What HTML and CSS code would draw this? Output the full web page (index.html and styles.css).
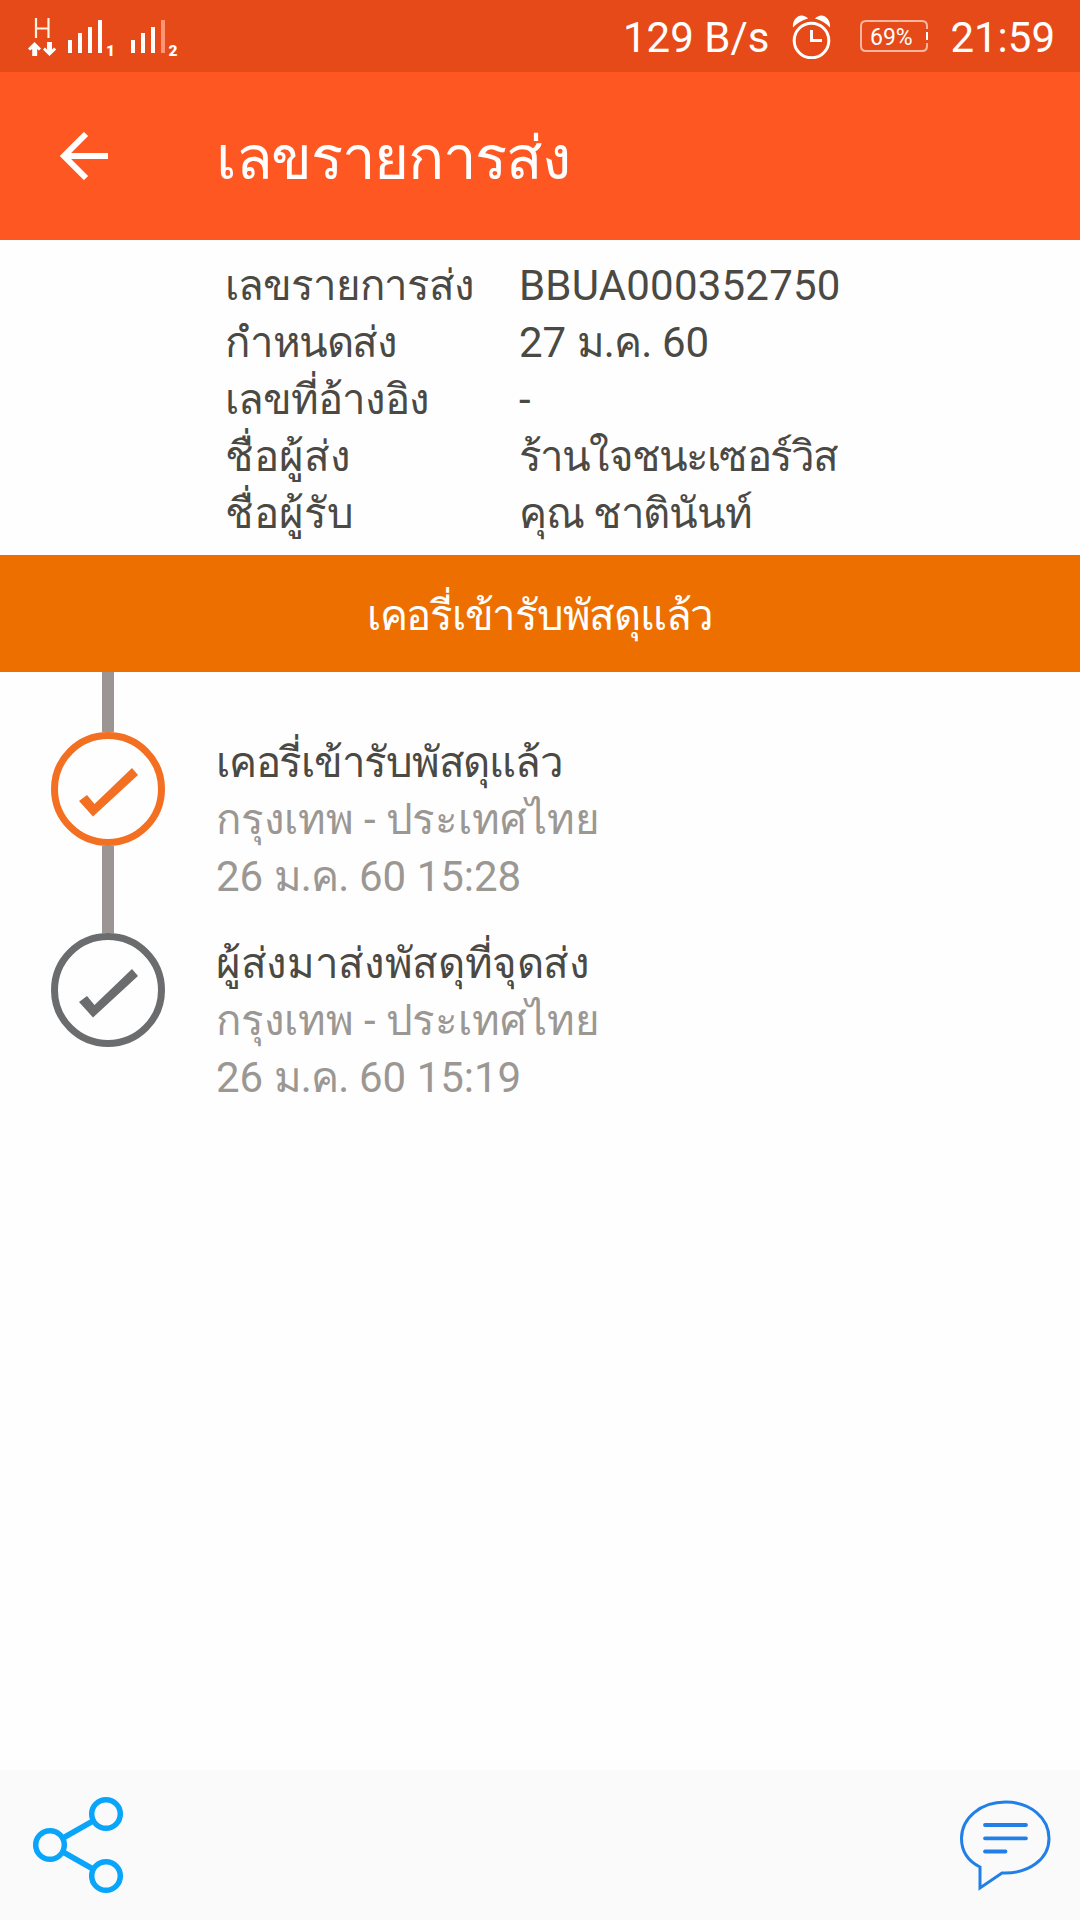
FILE: index.html
```
<!DOCTYPE html>
<html lang="th">
<head>
<meta charset="utf-8">
<title>เลขรายการส่ง</title>
<link rel="stylesheet" href="styles.css">
</head>
<body>
<div class="screen">
  <div class="status-bar">
    <svg class="network" width="152" height="44" viewBox="0 0 152 44" fill="none">
      <path d="M8 3V23M20.500 3V23M8 13.500H20.500" stroke="#fff3df" stroke-width="2.200"/>
      <path d="M6.500 27L13 33.500L11 35.500L9.200 34V41H4.200V34L2 35.500L0 33.500ZM19 27H24V34.500L26 32.500L28.200 34.500L21.500 41L15 34.500L17 32.500L19 34.500Z" fill="#fff"/>
      <path d="M42 25V38M52 18V38M62 12V38M72 5V38M105 25V38M115 18V38M125 12V38" stroke="#fff" stroke-width="4"/>
      <path d="M135 5V38" stroke="#ff9474" stroke-width="4"/>
      <text class="sim" x="78" y="41">1</text>
      <text class="sim" x="140.500" y="41">2</text>
    </svg>
    <div class="status-right">
      <span class="rate">129 B/s</span>
      <svg class="alarm" width="40" height="44" viewBox="0 0 40 44" fill="none">
        <circle cx="19.500" cy="25.500" r="17.300" stroke="#fff" stroke-width="3"/>
        <path d="M19.500 15V25.500H30" stroke="#fff" stroke-width="3"/>
        <path d="M1 12.500C0 5 6 0 10 .5C13 1 15 2 16 3.500C10 5 5 8 1 12.500ZM38 12.500C39 5 33 0 29 .5C26 1 24 2 23 3.500C29 5 34 8 38 12.500Z" fill="#fff"/>
      </svg>
      <svg class="battery" width="69" height="32" viewBox="0 0 69 32" fill="none">
        <path d="M67 9V6Q67 1 62 1H6Q1 1 1 6V26Q1 31 6 31H62Q67 31 67 26V23" stroke="#fbb6a0" stroke-width="2"/>
        <path d="M67 12V20" stroke="#fff" stroke-width="2"/>
        <text class="level" x="10" y="24.500">69%</text>
      </svg>
      <span class="clock">21:59</span>
    </div>
  </div>

  <header class="app-bar">
    <svg class="back" width="48" height="48" viewBox="0 0 48 48" fill="none" stroke="#fff" stroke-width="6">
      <path d="M26 2L4 24L26 46M4 24H48"/>
    </svg>
    <h1 class="title">เลขรายการส่ง</h1>
  </header>

  <dl class="details">
    <dt>เลขรายการส่ง</dt><dd class="number">BBUA000352750</dd>
    <dt class="due">กำหนดส่ง</dt><dd>27 <span class="month">ม.ค.</span> 60</dd>
    <dt>เลขที่อ้างอิง</dt><dd>-</dd>
    <dt class="loose">ชื่อผู้ส่ง</dt><dd class="sender">ร้านใจชนะเซอร์วิส</dd>
    <dt class="loose">ชื่อผู้รับ</dt><dd class="receiver">คุณ ชาตินันท์</dd>
  </dl>

  <div class="banner">เคอรี่เข้ารับพัสดุแล้ว</div>

  <main class="timeline">
    <section class="event current">
      <div class="rail">
        <div class="line lead"></div>
        <svg class="mark" width="114" height="114" viewBox="0 0 114 114"><circle cx="57" cy="57" r="53.500" fill="none" stroke="currentColor" stroke-width="7"/><path d="M28 69L36 63L43.500 72L81 36L87 43L42 84.500Z" fill="currentColor"/></svg>
        <div class="line"></div>
      </div>
      <div class="text">
        <p class="name picked">เคอรี่เข้ารับพัสดุแล้ว</p>
        <p class="place">กรุงเทพ - ประเทศไทย</p>
        <p>26 <span class="month">ม.ค.</span> 60 15:28</p>
      </div>
    </section>
    <section class="event">
      <div class="rail">
        <svg class="mark" width="114" height="114" viewBox="0 0 114 114"><circle cx="57" cy="57" r="53.500" fill="none" stroke="currentColor" stroke-width="7"/><path d="M28 69L36 63L43.500 72L81 36L87 43L42 84.500Z" fill="currentColor"/></svg>
      </div>
      <div class="text">
        <p class="name">ผู้ส่งมาส่งพัสดุที่จุดส่ง</p>
        <p class="place">กรุงเทพ - ประเทศไทย</p>
        <p>26 <span class="month">ม.ค.</span> 60 15:19</p>
      </div>
    </section>
  </main>

  <footer class="bottom-bar">
    <svg width="92" height="98" viewBox="0 0 92 98" fill="none" stroke="#08a5fb" stroke-width="5.500">
      <circle cx="18" cy="49" r="14.300"/><circle cx="74" cy="18" r="14.300"/><circle cx="74" cy="80" r="14.300"/>
      <path d="M31 42L61 25M31 56L61 73"/>
    </svg>
    <svg width="92" height="92" viewBox="0 0 92 92" fill="none" stroke="#2180e8" stroke-width="3" stroke-linecap="round">
      <path d="M20 67C8 61 1.500 51 1.500 38.500C1.500 18 20.500 2 45.500 2C70.500 2 89 18 89 38.500C89 59 69 74 42 73L20 88Z"/>
      <path d="M25 25H66M25 38.300H66M25 51.500H45.500" stroke-width="3.800"/>
    </svg>
  </footer>
</div>
</body>
</html>
```
FILE: styles.css
```
* { box-sizing: border-box; margin: 0; padding: 0; }
body { background: #fefefe; }
svg { display: block; flex: none; }
.screen {
  width: 1080px;
  height: 1920px;
  display: flex;
  flex-direction: column;
  overflow: hidden;
  font: 42px/57px Roboto, "Noto Sans", sans-serif;
  color: #4b4944;
}

.status-bar {
  height: 72px;
  padding: 0 25px 0 28px;
  display: flex;
  justify-content: space-between;
  background: #e64a19;
  color: #fff;
}
.network { margin-top: 15px; }
.sim { font: 900 15.5px Roboto, sans-serif; fill: #fff; }
.status-right { display: flex; }
.rate, .clock { padding-top: 9px; }
.alarm { margin: 15px 28px 0 23px; }
.battery { margin: 20px 21px 0 0; }
.level { font: 23px Roboto, sans-serif; fill: #fff; }

.app-bar {
  height: 168px;
  padding-left: 60px;
  display: flex;
  gap: 108px;
  background: #ff5722;
  color: #fff;
}
.back { margin-top: 60px; }
.title {
  padding-top: 47px;
  font-size: 60px;
  line-height: 80px;
  font-weight: 400;
  letter-spacing: -1.35px;
}

.details {
  height: 315px;
  padding: 17px 0 0 225px;
  display: grid;
  grid-template-columns: 294px 1fr;
  grid-auto-rows: 57px;
  align-content: start;
  white-space: nowrap;
}
.details dt { letter-spacing: -1.05px; }
.details .due { letter-spacing: -1.4px; }
.details .loose { letter-spacing: 0.1px; }
.number { letter-spacing: 0.2px; }
.sender { letter-spacing: -1.85px; }
.receiver { letter-spacing: -1.2px; }
.month { letter-spacing: -0.8px; }
.banner {
  height: 117px;
  padding-top: 32px;
  background: #ed6f00;
  color: #fff;
  text-align: center;
  letter-spacing: -1.25px;
}

.timeline { flex: 1; }
.event { display: flex; height: 201px; padding-left: 51px; gap: 51px; color: #6b6c6e; }
.event.current { height: 261px; color: #f36f21; }
.rail { display: flex; flex-direction: column; align-items: center; }
.line { width: 12px; flex: 1; background: #9b9693; }
.lead { flex: none; height: 60px; }
.text { color: #9b9793; padding-top: 2px; }
.current .text { padding-top: 62px; }
.name { color: #4b4944; letter-spacing: -0.35px; }
.picked { letter-spacing: -1.25px; }
.place { letter-spacing: -0.2px; }

.bottom-bar {
  height: 150px;
  padding: 26px 28px 0 32px;
  display: flex;
  justify-content: space-between;
  background: #fafafa;
}
.bottom-bar svg:last-child { margin-top: 4px; }
```
